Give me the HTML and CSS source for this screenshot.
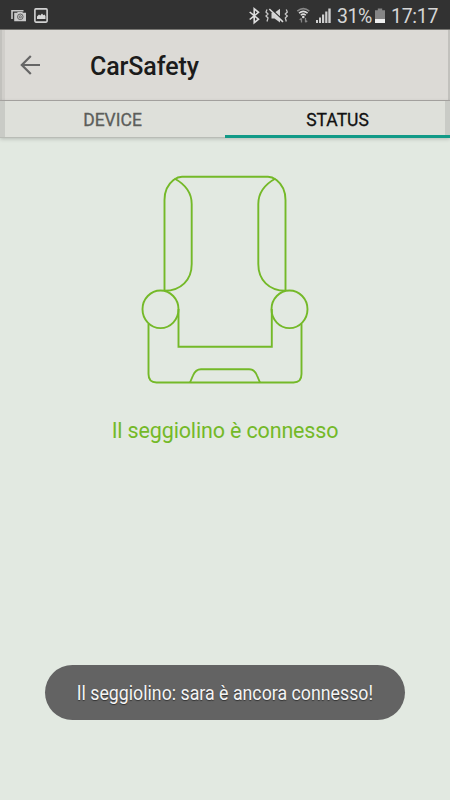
FILE: index.html
```html
<!DOCTYPE html>
<html lang="it">
<head>
<meta charset="utf-8">
<title>CarSafety</title>
<link rel="stylesheet" href="styles.css">
</head>
<body>
<div class="screen">
  <header class="statusbar">
    <svg class="left-icons" width="50" height="29" viewBox="0 0 50 29">
      <path d="M12 19V10.700h11.500" fill="none" stroke="#c9c9c9" stroke-width="1.600"/>
      <path d="M14.200 12.800h2.800l.8-.9h4.400l.8.9h3v8.500h-11.800z" fill="#c9c9c9"/>
      <circle cx="20.300" cy="16.800" r="2.800" fill="none" stroke="#555" stroke-width=".9"/>
      <circle cx="20.300" cy="16.800" r="1.100" fill="none" stroke="#555" stroke-width=".8"/>
      <rect x="34.900" y="8.900" width="12.200" height="13.200" rx="1" fill="none" stroke="#d2d2d2" stroke-width="1.600"/>
      <path d="M37 19v-2.500l2-2 1.300 1 1.700-2 1.400 1.800 1-.8 1.100 1.500v3z" fill="#d8d8d8"/>
    </svg>
    <div class="status-right">
      <svg width="86" height="29" viewBox="248 0 86 29">
        <path d="M249.700 12l8.800 7.200-4.300 3.500V8.800l4.300 3.500L249.700 19.500" fill="none" stroke="#ddd" stroke-width="1.600"/>
        <path d="M271.500 12.700h3l5.500-4v13.800l-5.500-4h-3z" fill="#d4d4d4"/>
        <path d="M270 8l14 13" stroke="#323232" stroke-width="1.500"/>
        <path d="M269.300 9l13.700 12.800" stroke="#d8d8d8" stroke-width="1.600"/>
        <path d="M267 9.500l-1 2.500 2 2-2 2 2 2-1 3.500M286.300 9.500l1 2.500-2 2 2 2-2 2 1 3.500" fill="none" stroke="#c6c6c6" stroke-width="1.300"/>
        <path d="M297.300 11.200q6-5 12 0" fill="none" stroke="#888" stroke-width="1.700"/>
        <path d="M299 13.200q4.300-3.600 8.600 0M300.800 15.200q2.500-2.200 5 0" fill="none" stroke="#ddd" stroke-width="1.500"/>
        <circle cx="303.300" cy="17" r="1.300" fill="#ddd"/>
        <path d="M301.500 22.500v-4M299.700 20l1.800-1.700M305.500 18v4.200M307.200 20.700l-1.700 1.600" stroke="#858585" stroke-width="1.300" fill="none"/>
        <path d="M316 20h2v3h-2zM319 17.500h2v5.500h-2zM322 14.500h2.200v8.500H322zM325.200 11.500h2.200v11.500h-2.200zM328.300 8.500h2.400v14.500h-2.400z" fill="#cdcdcd"/>
      </svg>
      <span class="battery-text">31%</span>
      <svg class="battery" width="12" height="29" viewBox="0 0 12 29">
        <path d="M1 10.300h2.800V8.500h4.400v1.800H11v12.700H1z" fill="#858585"/>
        <path d="M1 19h10v4H1z" fill="#eee"/>
      </svg>
      <span class="clock">17:17</span>
    </div>
  </header>
  <div class="toolbar">
    <svg class="back" width="22" height="20" viewBox="0 0 22 20">
      <path d="M21 10H3M11.800 1L2.800 10l9 9" fill="none" stroke="#666" stroke-width="2.200"/>
    </svg>
    <h1 class="title">CarSafety</h1>
  </div>
  <nav class="tabs">
    <a class="tab">DEVICE</a>
    <a class="tab active">STATUS</a>
  </nav>
  <main class="content">
    <svg class="seat" width="170" height="212" viewBox="140 174 170 212" fill="none" stroke="#74b928" stroke-width="1.900">
      <path d="M164.500 291V200Q164.500 187 173.500 180Q178 176.700 182 176.700H268Q272 176.700 276.500 180Q285.500 187 285.500 200V291"/>
      <path d="M174.500 178.500Q191.700 188 191.700 204V264C191.700 280 181 290.800 164.500 290.800"/>
      <path d="M275.500 178.500Q258.300 188 258.300 204V264C258.300 280 269 290.800 285.500 290.800"/>
      <ellipse cx="160.500" cy="309.300" rx="18" ry="18.800"/>
      <ellipse cx="289.500" cy="309.300" rx="18" ry="18.800"/>
      <path d="M178.500 309V346.700H271.800V309"/>
      <path d="M148.500 324V374Q148.500 382.500 156.500 382.500H293.500Q301.500 382.500 301.500 374V324"/>
      <path d="M190 382.500L193 375.500Q195.500 369.200 201 369.200H249Q254.500 369.200 257 375.500L260 382.500"/>
    </svg>
    <p class="message"><span class="message-text">Il seggiolino è connesso</span></p>
  </main>
  <div class="toast"><span class="toast-text">Il seggiolino: sara è ancora connesso!</span></div>
</div>
</body>
</html>
```
FILE: styles.css
```css
* {
  box-sizing: border-box;
}

body {
  margin: 0;
  font-family: Roboto, "Liberation Sans", sans-serif;
}

.screen {
  position: relative;
  display: flex;
  flex-direction: column;
  width: 450px;
  height: 800px;
  overflow: hidden;
  background: #e2e9e1;
}

.statusbar {
  display: flex;
  justify-content: space-between;
  height: 30px;
  padding-right: 12px;
  border-bottom: 1px solid #777672;
  background: #323232;
  color: #d6d6d6;
}

.status-right {
  display: flex;
  font-size: 19.500px;
  line-height: 33px;
  white-space: nowrap;
}

.battery-text {
  width: 35px;
  margin-left: 3px;
  letter-spacing: -0.4px;
}

.battery {
  margin-left: 2px;
}

.clock {
  width: 47px;
  margin-left: 5px;
  letter-spacing: -0.3px;
}

.toolbar {
  display: flex;
  align-items: center;
  height: 71px;
  padding: 0 19px;
  border-bottom: 1px solid #aaa8a5;
  background: #dcdad6;
  box-shadow: inset 2px 0 #c2c1bd, inset 5px 0 #d0ceca, inset -2px 0 #c2c1bd;
}

.title {
  margin: 3px 0 0 49px;
  font-size: 25px;
  font-weight: 500;
  line-height: 30px;
  letter-spacing: -0.1px;
  color: #1b1b1b;
}

.tabs {
  display: flex;
  height: 37px;
  background: #dee0da;
  box-shadow: inset 5px 0 #c9cbc6, inset -5px 0 #c9cbc6, 0 1px 4px rgba(0, 0, 0, 0.2);
}

.tab {
  flex: 1;
  border-bottom: 1px solid #b9bcb6;
  text-align: center;
  font-size: 17.500px;
  font-weight: 400;
  line-height: 38px;
  color: #5c5e5b;
  -webkit-text-stroke: 0.3px currentColor;
}

.tab.active {
  border-bottom: 3px solid #129a87;
  color: #111;
}

.content {
  display: flex;
  flex-direction: column;
  align-items: center;
  padding-top: 36px;
}

.message {
  margin: 31px 0 0;
  font-size: 21.500px;
  line-height: 28px;
  letter-spacing: -0.15px;
  color: #74b928;
}

.toast {
  position: absolute;
  left: 45px;
  top: 665px;
  display: flex;
  justify-content: center;
  align-items: center;
  width: 360px;
  height: 55px;
  border-radius: 28px;
  background: #636363;
  color: #f4f4f4;
  font-size: 20px;
  white-space: nowrap;
}

.toast-text {
  transform: scaleX(0.888);
  text-shadow: 0 1px 1px #333;
}
```
